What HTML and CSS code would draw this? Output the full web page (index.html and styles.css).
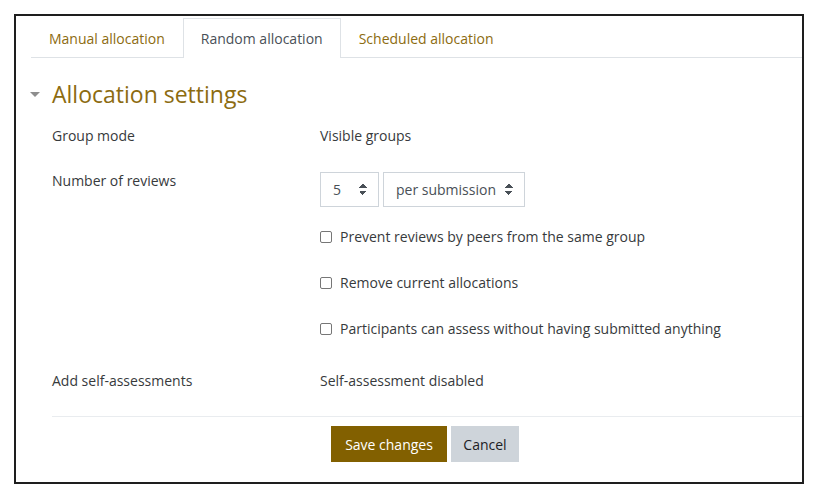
FILE: index.html
```html
<!DOCTYPE html>
<html lang="en">
<head>
  <meta charset="UTF-8" />
  <title>Random allocation</title>
  <link rel="stylesheet" href="styles.css">
</head>
<body>
  <div class="frame">
    <ul class="tabs">
      <li><a href="#">Manual allocation</a></li>
      <li class="active"><a href="#">Random allocation</a></li>
      <li><a href="#">Scheduled allocation</a></li>
    </ul>

    <h2 class="section-title"><span class="caret"></span>Allocation settings</h2>

    <form class="settings">
      <div class="row">
        <div class="label">Group mode</div>
        <div class="value">Visible groups</div>
      </div>
      <div class="row reviews">
        <div class="label">Number of reviews</div>
        <div class="value">
          <div class="selects">
            <span class="select small">5</span>
            <span class="select">per submission</span>
          </div>
          <label class="check"><span class="box"></span>Prevent reviews by peers from the same group</label>
          <label class="check"><span class="box"></span>Remove current allocations</label>
          <label class="check"><span class="box"></span>Participants can assess without having submitted anything</label>
        </div>
      </div>
      <div class="row">
        <div class="label">Add self-assessments</div>
        <div class="value">Self-assessment disabled</div>
      </div>
      <div class="actions">
        <button type="button" class="btn primary">Save changes</button>
        <button type="button" class="btn secondary">Cancel</button>
      </div>
    </form>
  </div>
</body>
</html>
```

FILE: styles.css
```css
body {
  margin: 0;
  padding: 14px;
  background: #fff;
  font-family: 'Open Sans', 'Noto Sans', sans-serif;
  font-size: 14px;
  color: #373a3c;
}
.frame {
  box-sizing: border-box;
  width: 790px;
  height: 470px;
  border: 2px solid #1e1e1e;
  padding-top: 2px;
}
.tabs {
  display: flex;
  list-style: none;
  margin: 0 0 0 15px;
  padding: 0;
  border-bottom: 1px solid #dee2e6;
}
.tabs li {
  margin-bottom: -1px;
}
.tabs a {
  display: block;
  height: 38px;
  line-height: 40px;
  padding: 0 17px;
  border: 1px solid transparent;
  border-bottom: 0;
  color: #8c6b10;
  text-decoration: none;
}
.tabs .active a {
  border-color: #dee2e6;
  background: #fff;
  color: #495057;
  height: 39px;
}
.section-title {
  display: flex;
  align-items: center;
  margin: 20px 0 0 14px;
  font-size: 23px;
  font-weight: 400;
  color: #8c6b10;
  height: 32px;
}
.caret {
  width: 0;
  height: 0;
  border-left: 5px solid transparent;
  border-right: 5px solid transparent;
  border-top: 5px solid #8e8e8e;
  margin-right: 12px;
  margin-top: 0;
}
.settings {
  margin: 0 0 0 36px;
}
.row {
  display: flex;
}
.label {
  width: 268px;
  flex: none;
}
.row:first-child {
  margin-top: 15px;
  line-height: 22px;
}
.reviews {
  margin-top: 23px;
}
.reviews .label {
  line-height: 22px;
}
.selects {
  display: flex;
  gap: 4px;
  margin-top: 2px;
}
.select {
  box-sizing: border-box;
  height: 35px;
  line-height: 33px;
  border: 1px solid #ced4da;
  padding: 0 23px 0 12px;
  position: relative;
  color: #495057;
}
.select.small {
  width: 59px;
}
.select:not(.small) {
  width: 142px;
}
.select::after {
  content: "";
  position: absolute;
  right: 11px;
  top: 11px;
  width: 8px;
  height: 11px;
  background:
    linear-gradient(to bottom right, transparent 50%, #495057 50%) 0 0 / 4px 4px no-repeat,
    linear-gradient(to bottom left, transparent 50%, #495057 50%) 4px 0 / 4px 4px no-repeat,
    linear-gradient(to top right, transparent 50%, #495057 50%) 0 7px / 4px 4px no-repeat,
    linear-gradient(to top left, transparent 50%, #495057 50%) 4px 7px / 4px 4px no-repeat;
}
.check {
  display: flex;
  align-items: center;
  margin-top: 19px;
  line-height: 22px;
}
.check + .check {
  margin-top: 24px;
}
.box {
  box-sizing: border-box;
  width: 12px;
  height: 12px;
  border: 1px solid #767676;
  border-radius: 2px;
  margin-right: 8px;
}
.row:nth-child(3) {
  margin-top: 30px;
  line-height: 22px;
}
.actions {
  margin-top: 24px;
  border-top: 1px solid #e9ecef;
  padding: 9px 0 0 279px;
  display: flex;
  gap: 4px;
}
.btn {
  height: 36px;
  border: 0;
  font: inherit;
  padding: 0 12px;
  border-radius: 0;
}
.primary {
  background: #826000;
  color: #fff;
  width: 116px;
}
.secondary {
  background: #ced4da;
  color: #1d2125;
  width: 68px;
}
```
